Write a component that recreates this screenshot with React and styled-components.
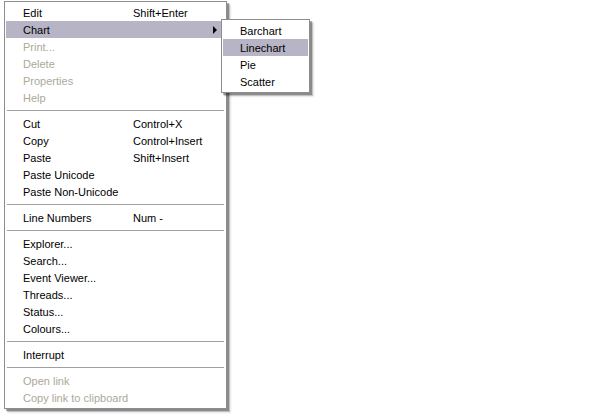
import React from "react";
import styled, { createGlobalStyle } from "styled-components";

const GlobalStyle = createGlobalStyle`
  html, body {
    margin: 0;
    background: #ffffff;
  }
  body {
    font-family: "Liberation Sans", Arial, sans-serif;
    font-size: 11px;
    color: #000000;
  }
`;

// the whole context menu tree, main menu sits top-left of the page
const mainItems = [
  { label: "Edit", shortcut: "Shift+Enter" },
  { label: "Chart", submenu: true, active: true },
  { label: "Print...", disabled: true },
  { label: "Delete", disabled: true },
  { label: "Properties", disabled: true },
  { label: "Help", disabled: true },
  { sep: true },
  { label: "Cut", shortcut: "Control+X" },
  { label: "Copy", shortcut: "Control+Insert" },
  { label: "Paste", shortcut: "Shift+Insert" },
  { label: "Paste Unicode" },
  { label: "Paste Non-Unicode" },
  { sep: true },
  { label: "Line Numbers", shortcut: "Num -" },
  { sep: true },
  { label: "Explorer..." },
  { label: "Search..." },
  { label: "Event Viewer..." },
  { label: "Threads..." },
  { label: "Status..." },
  { label: "Colours..." },
  { sep: true },
  { label: "Interrupt" },
  { sep: true },
  { label: "Open link", disabled: true },
  { label: "Copy link to clipboard", disabled: true },
];

const chartItems = [
  { label: "Barchart" },
  { label: "Linechart", active: true },
  { label: "Pie" },
  { label: "Scatter" },
];

const App = () => {
  return (
    <>
      <GlobalStyle />
      <Page>
        <Menu $width={223}>
          {mainItems.map((item, i) => {
            if (item.sep) return <Separator key={i} />;
            return (
              <Item key={i} $active={item.active} $disabled={item.disabled}>
                <Label>{item.label}</Label>
                {item.shortcut && <Shortcut>{item.shortcut}</Shortcut>}
                {item.submenu && (
                  <>
                    <Arrow />
                    <SubMenu $width={89}>
                      {chartItems.map((sub) => (
                        <Item key={sub.label} $active={sub.active}>
                          <SubLabel>{sub.label}</SubLabel>
                        </Item>
                      ))}
                    </SubMenu>
                  </>
                )}
              </Item>
            );
          })}
        </Menu>
      </Page>
    </>
  );
};

const Page = styled.div`
  width: 600px;
  height: 414px;
  padding: 1px 0 0 4px;
  box-sizing: border-box;
  overflow: hidden;
`;

const Menu = styled.div`
  width: ${(p) => p.$width}px;
  box-sizing: border-box;
  display: flex;
  flex-direction: column;
  background: #ffffff;
  border: 1px solid #8d8d8d;
  padding: 2px 1px;
  box-shadow: 2px 2px 0 rgba(0, 0, 0, 0.28), 3px 3px 1px rgba(0, 0, 0, 0.18),
    4px 4px 2px rgba(0, 0, 0, 0.08);
`;

const SubMenu = styled(Menu)`
  position: absolute;
  top: -2px;
  left: 215px;
  z-index: 5;
`;

const Item = styled.div`
  position: relative;
  display: flex;
  align-items: center;
  height: 17px;
  padding-left: 17px;
  background: ${(p) => (p.$active ? "#b7b4c6" : "transparent")};
  color: ${(p) => (p.$disabled ? "#aca899" : "#000000")};
  white-space: nowrap;
  cursor: default;
`;

const Label = styled.span`
  width: 110px;
  flex-shrink: 0;
`;

const SubLabel = styled.span`
  padding-left: 0;
`;

const Shortcut = styled.span``;

const Arrow = styled.span`
  position: absolute;
  right: 8px;
  top: 5px;
  width: 0;
  height: 0;
  border-top: 4px solid transparent;
  border-bottom: 4px solid transparent;
  border-left: 4px solid #000000;
`;

const Separator = styled.div`
  height: 1px;
  margin: 4px 1px;
  background: #a0a0a0;
`;

export default App;
